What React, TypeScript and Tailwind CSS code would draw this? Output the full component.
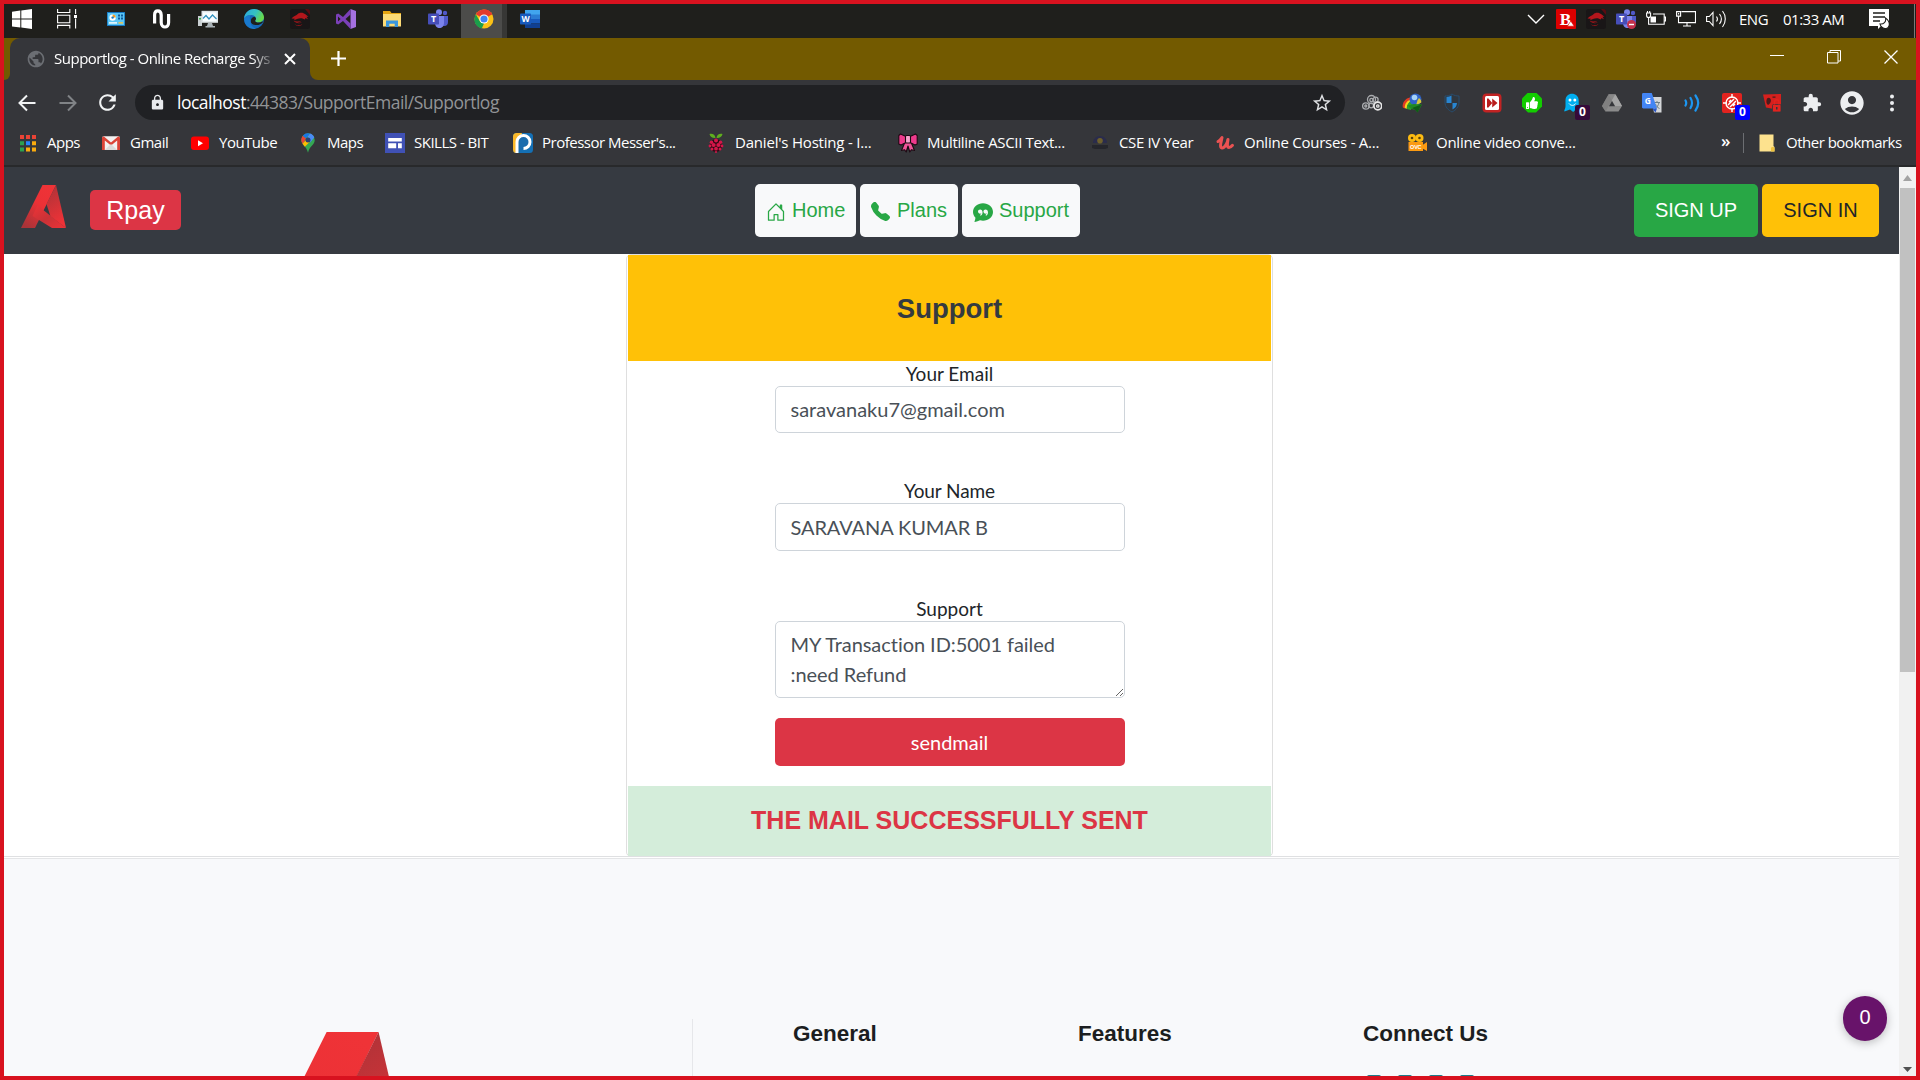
import React from "react";
import { BsChatQuoteFill, BsHouseDoor, BsTelephoneFill } from "react-icons/bs";
import { FaThumbsUp } from "react-icons/fa";
import { MdAccountCircle, MdExtension, MdLock, MdPublic, MdRefresh, MdStarBorder } from "react-icons/md";

const svg = { xmlns: "http://www.w3.org/2000/svg", viewBox: "0 0 20 20", width: 20, height: 20 };

/* ---------- taskbar icons ---------- */

const WindowsIcon = () => (
  <svg {...svg} fill="#fff">
    <path d="M0 2.8 8.3 1.6V9.6H0zM9.3 1.4 20 0v9.6H9.3zM0 10.6h8.3v8L0 17.4zM9.3 10.6H20V20L9.3 18.6z" />
  </svg>
);
const TaskViewIcon = () => (
  <svg {...svg} fill="none" stroke="#fff" strokeWidth="1.1">
    <path d="M.6 0v3.5h12.2V0M.6 6.2h12.2v7.6H.6zM.6 19.4v-3h12.2v3M18.6 0v5M18.6 9.6V19.4" />
    <path d="M17 6h3v3h-3z" fill="#fff" stroke="none" />
  </svg>
);
const NewsIcon = () => (
  <svg {...svg}>
    <rect x="1" y="3" width="18" height="14" fill="#1579c4" />
    <rect x="1.8" y="4" width="16.4" height="12" fill="#5cc6f5" />
    <circle cx="6.6" cy="8.6" r="3.2" fill="#fff" />
    <path d="M6.6 8.6V5.4a3.2 3.2 0 0 1 3.2 3.2z" fill="#f29a1f" />
    <circle cx="6.6" cy="8.6" r="1.2" fill="#1579c4" />
    <path d="M12 5.6h2v2h-2zM15 5.6h2v2h-2zM12 8.6h2v2h-2zM15 8.6h2v2h-2z" fill="#0c5ca0" />
    <path d="M3 13.2h8v1.4H3z" fill="#fff" />
    <path d="M12.5 13.2H17v1.4h-4.5z" fill="#f6c544" />
  </svg>
);
const WaveIcon = () => (
  <svg {...svg} fill="none" stroke="#fff" strokeWidth="3.2">
    <path d="M2.6 14.5V6c0-5.500 6.400-5.500 6.600 0v7.500c.2 6 7.400 6 7.400 0V5" />
  </svg>
);
const MonitorIcon = () => (
  <svg {...svg}>
    <path d="M0 7h4v10H0z" fill="#c9cfd2" />
    <path d="M1 9h2v1.5H1z" fill="#3bb44a" />
    <path d="M3.5 1.8H20v12H3.5z" fill="#dfe5e8" />
    <path d="M5 3.3h13.5v9H5z" fill="#f8fdff" />
    <path d="m5 9.5 3-3 3 3.500 3.500-4 4 4" fill="none" stroke="#3190bd" strokeWidth="1.2" />
    <path d="M10 14h4l1 3h2v1.6H7.5V17H9z" fill="#a9b2b6" />
  </svg>
);
const EdgeIcon = () => (
  <svg {...svg}>
    <defs>
      <linearGradient id="edgeTop" x1="0" y1="0" x2="1" y2=".4">
        <stop offset="0" stopColor="#2aa7e0" />
        <stop offset=".6" stopColor="#35c1c0" />
        <stop offset="1" stopColor="#66d94c" />
      </linearGradient>
    </defs>
    <circle cx="10" cy="10" r="10" fill="#1568b8" />
    <path d="M0 9.5C.5 4 5 0 10 0c5.7 0 10 4 10 8.2 0 3.3-2.6 5.2-5.5 5.2-2 0-3.4-.7-3.4-1.500 0-.6.9-1 .9-2.500C12 7.500 9.600 6 6.800 6 3.500 6 1 7.600 0 9.500z" fill="url(#edgeTop)" />
    <path d="M6.7 12.5c0-2.600 1.500-4.300 3.800-4.800 1 .5 1.500 1.200 1.500 2-.1 1.300-.9 1.600-.9 2.300 0 .8 1.400 1.500 3.400 1.500 1.600 0 2.900-.5 3.900-1.300.3.300.5.900.3 1.300-1.500 1.500-3.500 2.600-5.900 2.600-3.500 0-6.100-1.500-6.100-3.600z" fill="#1f1f1c" />
    <path d="M6.6 12c-.2 3.500 2 7 6 7.600A10 10 0 0 1 0 10c1-2.500 4-4 7-4-1.500 1-1.500 3.500-.4 6z" fill="#1b7fd4" opacity=".75" />
  </svg>
);
const DragonIcon = () => (
  <svg {...svg}>
    <rect width="20" height="20" rx="2.5" fill="#191617" />
    <path d="M15 0h2.5A2.5 2.5 0 0 1 20 2.5V6z" fill="#5a0c12" />
    <path d="M1.500 9.500C3.500 7 6 6.700 7.500 5.200c1-1.300 3-1.800 5-1.400L15 5l3.500 2.800-2-.1 1.500 2.600-2.600-1.300-.4 1.500-2-.8c-2-.8-4-.3-6 .3L4 11.200l.8-1.500z" fill="#b3161c" />
    <path d="M3.500 11.500c2 1.300 5 1.300 8 .3-.8.8-2.500 1.300-4.500 1.300 1.500.7 3.500.8 5 .2-2 1.500-6.500 1.200-8.500-1.800zM4.500 15c2 1.500 5 1.700 8 .2-2 2.300-6 2.300-8-.2z" fill="#a8141a" />
  </svg>
);
const VisualStudioIcon = () => (
  <svg {...svg}>
    <path d="m14.5 0 5.500 2v16l-5.500 2z" fill="#a571e0" />
    <path d="M14.5 0 7 7.900 2.200 4.400 0 5.500v9l2.200 1.100L7 12.100l7.500 7.900v-5.500L9.500 10l5-4.500zM2 7.500 4.600 10 2 12.500z" fill="#7b40b8" fillRule="evenodd" />
  </svg>
);
const ExplorerIcon = () => (
  <svg {...svg}>
    <path d="M1 2h7l1.500 2H19v13H1z" fill="#e5a512" />
    <path d="M1 5h18v12.5H1z" fill="#fcdb76" />
    <path d="M4 18v-6.500h12V18h-3.300v-3.300H7.300V18z" fill="#3a96dd" />
  </svg>
);
const TeamsIcon = ({ busy = false }: { busy?: boolean }) => (
  <svg {...svg}>
    <circle cx="11" cy="3.2" r="3" fill="#7b83eb" />
    <circle cx="17" cy="4" r="2.2" fill="#5059c9" />
    <path d="M14 7h6v6c0 2.500-1.500 4-3.500 4H14z" fill="#5059c9" />
    <path d="M7 7h9v7c0 3-2 5-4.500 5S7 17 7 14z" fill="#7b83eb" />
    <rect x="0" y="4.5" width="11" height="11" rx=".8" fill="#464eb8" />
    <text x="5.5" y="13.2" fontSize="9" fontWeight="700" fontFamily="Open Sans, sans-serif" fill="#fff" textAnchor="middle">T</text>
    {busy && <circle cx="15.5" cy="15.5" r="4.5" fill="#c4314b" />}
    {busy && <path d="M13 14.8h5v1.4h-5z" fill="#fff" />}
  </svg>
);
const ChromeIcon = () => (
  <svg {...svg}>
    <circle cx="10" cy="10" r="9.5" fill="#fbc116" />
    <path d="M10 10 1.8 5.2A9.500 9.500 0 0 1 18.200 5.300z" fill="#e33b2e" />
    <path d="M10 .5a9.500 9.500 0 0 1 8.300 5H10z" fill="#e33b2e" />
    <path d="M1.8 5.2 6 12.500l4 2-2.200 5A9.500 9.500 0 0 1 1.800 5.200z" fill="#1a9e4b" />
    <circle cx="10" cy="10" r="4.6" fill="#fff" />
    <circle cx="10" cy="10" r="3.6" fill="#3f83f1" />
  </svg>
);
const WordIcon = () => (
  <svg {...svg}>
    <path d="M5 1h15v5H5z" fill="#41a5ee" />
    <path d="M5 5.5h15V10H5z" fill="#2b7cd3" />
    <path d="M5 10h15v4.5H5z" fill="#185abd" />
    <path d="M5 14.5h15V19H5z" fill="#103f91" />
    <rect x="0" y="4.5" width="11" height="11" rx=".8" fill="#185abd" />
    <text x="5.5" y="13" fontSize="8.5" fontWeight="700" fontFamily="Open Sans, sans-serif" fill="#fff" textAnchor="middle">W</text>
  </svg>
);

/* ---------- tray icons ---------- */

const ChevronIcon = () => (
  <svg {...svg} fill="none" stroke="#fff" strokeWidth="1.4"><path d="m2 6 8 8 8-8" /></svg>
);
const BitdefenderIcon = () => (
  <svg {...svg}>
    <rect width="20" height="20" rx="1" fill="#dc0000" />
    <text x="9.5" y="15.5" fontSize="17" fontWeight="700" fontFamily="Liberation Serif, serif" fill="#fff" textAnchor="middle">B</text>
    <path d="m14.8 12 3.4 5.200h-6.800z" fill="#fff" stroke="#dc0000" strokeWidth=".6" />
  </svg>
);
const BatteryIcon = () => (
  <svg {...svg} fill="none" stroke="#fff" strokeWidth="1.1">
    <path d="M7 5h11.200v10.200H2.600V10M18.500 8h1v4h-1M.6 4h4v2.500c0 1.500-.8 2-2 2s-2-.5-2-2zM1.500 4V2M3.700 4V2M2.600 8.500V11" />
    <path d="M4.5 7.500H10v6H4.500z" fill="#fff" stroke="none" />
  </svg>
);
const NetworkIcon = () => (
  <svg {...svg} fill="none" stroke="#fff" strokeWidth="1.1">
    <path d="M5.500 2.600h14v11H2.500V8M11 13.600V17M7 17h8M.6 2.600h4v4.500h-4zM2.600 7v1.500M2.600 4v1.500" />
  </svg>
);
const VolumeIcon = () => (
  <svg {...svg} fill="none" stroke="#fff" strokeWidth="1.1">
    <path d="M.6 7.500h2.700L7 3.500v13l-3.700-4H.6zM10.500 7.500c1.200 1.600 1.200 3.400 0 5M13.500 5c2.300 3 2.300 7 0 10" />
    <path d="M16.500 2c3.700 4.500 3.700 11.500 0 16" />
  </svg>
);
const NotificationIcon = () => (
  <svg {...svg}>
    <path d="M0 0h20v17h-8l-3 3v-3H0z" fill="#fff" />
    <path d="M4 4h12M4 8h12M4 12h7" stroke="#1f1f1c" strokeWidth="1.3" />
    <path d="M16.5 9c1 4-2 6.500-5.500 6 .6 3 3.500 5 6.200 4.500 3-.6 4-4.500 2.200-7.500-.7-1.300-1.700-2.300-2.900-3z" fill="#fff" stroke="#1f1f1c" strokeWidth="1.1" />
  </svg>
);

/* ---------- bookmark icons ---------- */

const AppsIcon = () => (
  <svg {...svg}>
    <path d="M2 2h4v4H2zM8 2h4v4H8zM14 2h4v4h-4z" fill="#ea4335" />
    <path d="M2 8.2h4v4H2zM2 14.4h4v4H2z" fill="#2ca14f" />
    <path d="M8 8.2h4v4H8z" fill="#2684fc" />
    <path d="M14 8.2h4v4h-4zM8 14.4h4v4H8zM14 14.4h4v4h-4z" fill="#fbab0e" />
  </svg>
);
const GmailIcon = () => (
  <svg {...svg}>
    <rect x="1" y="3.3" width="18" height="13.7" rx="1.5" fill="#f3f1f0" />
    <path d="M1 17V4.500L2.600 3.300 10 9.500l7.400-6.200L19 4.500V17h-2.800V7.500L10 12.600 3.800 7.500V17z" fill="#db4437" />
    <path d="M3.8 17 10 11l6.200 6z" fill="#dcdad8" />
  </svg>
);
const YouTubeIcon = () => (
  <svg {...svg}>
    <rect x="1" y="3.5" width="18" height="13.5" rx="3" fill="#f00" />
    <path d="m8 7.2 5 3-5 3z" fill="#fff" />
  </svg>
);
const MapsIcon = () => (
  <svg {...svg}>
    <path d="M10 .3A6.700 6.700 0 0 0 3.300 7c0 5 5.200 6 6.700 12.700C11.500 13 16.700 12 16.700 7A6.700 6.700 0 0 0 10 .3z" fill="#34a853" />
    <path d="M4.8 2.700 8 5.500 4.900 11C3.900 9.700 3.300 8.500 3.300 7c0-1.700.6-3.200 1.500-4.300z" fill="#ea4335" />
    <path d="M4.9 2.700A6.700 6.700 0 0 1 12 .6L8 5.300z" fill="#1a73e8" />
    <path d="M12 .6c2 .6 3.600 2 4.300 4l-4.100 4.800L9.500 4z" fill="#4a8cf5" />
    <path d="m12.2 8.500-5.400 5.300L4.600 10.800 8 7z" fill="#fbbc04" />
    <circle cx="10" cy="7" r="2.5" fill="#2c3e70" />
  </svg>
);
const SitesIcon = () => (
  <svg {...svg}>
    <path d="M0 0h20v20H0z" fill="#4051b5" />
    <path d="M3.2 5h13.600v3.400H3.200zM3.200 10.300h8v5h-8zM13 10.300h3.800v5H13z" fill="#fff" />
  </svg>
);
const MesserIcon = () => (
  <svg {...svg}>
    <rect width="20" height="20" rx="3.5" fill="#1470b5" />
    <path d="M3.5 0H9L4 20h-.5A3.500 3.500 0 0 1 0 16.500v-13A3.500 3.500 0 0 1 3.500 0z" fill="#fbb829" />
    <path d="M4 20V9a6.500 6.500 0 1 1 6.500 6.500" fill="#1a6cad" stroke="#fff" strokeWidth="3" />
  </svg>
);
const RaspberryIcon = () => (
  <svg {...svg}>
    <path d="M9.5 5C7 5.500 4 4 3.500 1c3-.8 5.500.5 6 4zM10.500 5C13 5.500 16 4 16.500 1c-3-.8-5.500.5-6 4z" fill="#5fae1f" />
    <circle cx="10" cy="12.5" r="6.3" fill="#2a0a12" />
    <g fill="#d6164a">
      <circle cx="10" cy="7.6" r="2" /><circle cx="5.5" cy="9.2" r="1.8" /><circle cx="14.5" cy="9.2" r="1.8" />
      <circle cx="7.6" cy="12" r="2.1" /><circle cx="12.4" cy="12" r="2.1" /><circle cx="4" cy="13" r="1.4" />
      <circle cx="16" cy="13" r="1.4" /><circle cx="10" cy="15.7" r="1.9" /><circle cx="6" cy="16" r="1.5" />
      <circle cx="14" cy="16" r="1.5" /><circle cx="10" cy="19" r="1" />
    </g>
  </svg>
);
const BowIcon = () => (
  <svg {...svg} stroke="#1b0a12" strokeWidth="1.1" strokeLinejoin="round">
    <path d="M7 9 3.500 17.500l3-.8 1.700 2.300L10 13l1.800 6 1.700-2.300 3 .8L13 9z" fill="#f0559a" />
    <path d="M8 3.500 2.500 1 .8 2.500V11l2.200 1 5-2.500zM12 3.500 17.500 1l1.700 1.500V11L17 12l-5-2.500z" fill="#ee3a8c" />
    <rect x="7.5" y="2.500" width="5" height="7.500" rx="1" fill="#f7a3cc" />
  </svg>
);
const CapIcon = () => (
  <svg {...svg}>
    <path d="M3 10c0-4 3-7 7-7s7 3 7 7z" fill="#2a2c4c" />
    <circle cx="10" cy="7.8" r="2.8" fill="#6e602d" />
    <path d="M2 12h16v3l-3 1H5l-3-1z" fill="#25262c" />
  </svg>
);
const UdemyIcon = () => (
  <svg {...svg} fill="none" stroke="#ea5252" strokeWidth="3" strokeLinecap="round" strokeLinejoin="round">
    <path d="M3 8.500C5 7.500 6 6 7 4.500 6.500 8 4 14.500 7 15c3 .3 5.500-6 6-8.500-.5 3-1.500 8 1 8 1.500 0 2.500-1 3.500-2.200" />
  </svg>
);
const VideoIcon = () => (
  <svg {...svg}>
    <circle cx="5" cy="5" r="4" fill="#fdbb12" /><circle cx="12.5" cy="5" r="4" fill="#fdbb12" />
    <circle cx="5" cy="5" r="1.3" fill="#5b430c" /><circle cx="12.5" cy="5" r="1.3" fill="#5b430c" />
    <path d="M1.5 9H16v9H1.500z" fill="#fb9a12" />
    <path d="m15.5 12 4.500-3v9l-4.500-2.500z" fill="#fb9a12" />
    <text x="8.7" y="15.8" fontSize="5.5" fontWeight="700" fontFamily="Liberation Sans, sans-serif" fill="#fff" textAnchor="middle">OVC</text>
  </svg>
);
const FolderIcon = () => (
  <svg {...svg}>
    <path d="M2.5 1.5h14V13l1 1v4.500h-15z" fill="#fde28e" />
    <path d="M14 18.5V15c0-1.500 3.500-1.500 3.500 0v3.500z" fill="#efc33e" />
  </svg>
);

/* ---------- extension icons ---------- */

const ChainIcon = () => (
  <svg {...svg} fill="none" stroke="#a9abae" strokeWidth="1.3">
    <circle cx="3.8" cy="13" r="3.2" /><circle cx="3.8" cy="13" r="1" />
    <circle cx="9.500" cy="6.5" r="4" /><circle cx="9.500" cy="7" r="1.7" />
    <circle cx="9.200" cy="12.500" r="2.300" /><circle cx="13.500" cy="6.800" r="2.600" />
    <circle cx="15.8" cy="13" r="3.900" stroke="#e8e8e8" strokeWidth="1.700" /><circle cx="15.8" cy="13" r="1.2" stroke="#e8e8e8" />
  </svg>
);
const IdmIcon = () => (
  <svg {...svg}>
    <path d="M8 4.500C3 5.500 0 10 .8 14.500L3 15.500c0-4 2-7 6-8.500z" fill="#e43b22" />
    <path d="M9 6.500C5 7.500 2.500 11 2.800 15l2 1c0-3.500 1.500-6 5-7.500z" fill="#f4d31f" />
    <path d="M9.500 8C6.500 9 4.500 12 4.800 16l4 1 3-6z" fill="#2ba02b" />
    <circle cx="13.5" cy="6.5" r="6" fill="#2f63c6" />
    <circle cx="12.5" cy="4.5" r="2.800" fill="#a5d2f7" />
    <path d="M13.500 12.500c2-2.500 1-5 3.500-7.500 1.500 1 2.500 3 2.300 4.500z" fill="#d8c93a" />
    <path d="m6 12.500 6-1.500 8 .5-4.500 8-2.500-3C10 17 8 15.500 6 12.500z" fill="#1f8a22" />
    <path d="m10 15 9.500-3.500-4 8-2.500-3z" fill="#0f5c16" />
  </svg>
);
const ShieldIcon = () => (
  <svg {...svg}>
    <path d="M10 1c2 1.500 4.500 2 7 2v6c0 5-3 8-7 10-4-2-7-5-7-10V3c2.500 0 5-.5 7-2z" fill="#30373f" stroke="#294c6c" />
    <path d="M4.5 4c2-.2 3.800-.6 5-1.500V10h-5zM10.500 10H15c-.2 3-1.800 5.200-4.500 6.500z" fill="#2886d2" />
  </svg>
);
const FastForwardIcon = () => (
  <svg {...svg}>
    <rect x=".5" y=".5" width="19" height="19" rx="4" fill="#c12323" />
    <rect x="3" y="3" width="14" height="14" rx="1.500" fill="#fff" />
    <path d="M5 5.500h1.500L10.200 10l-3.700 4.500H5L7.500 10zM5 5.500 10.200 10 5 14.500zM10.200 5.500l5.300 4.500-5.300 4.500z" fill="#b91e1e" />
  </svg>
);
const ThumbIcon = () => (
  <div className="grid h-5 w-5 place-items-center bg-[#13cd00] [clip-path:polygon(30%_0,70%_0,100%_30%,100%_70%,70%_100%,30%_100%,0_70%,0_30%)]">
    <FaThumbsUp size={12} color="#fff" />
  </div>
);
const GhostIcon = () => (
  <svg {...svg}>
    <path d="M3.5 13V7.500C3.500 3 6.500.7 10 .7s6.700 2.300 6.700 6.800V18l-3-1.500-2.500 2.500L8 16.500l-5.500 2C1.800 17 3.500 16 3.500 13z" fill="#00aef0" />
    <circle cx="8" cy="7" r="1.5" fill="#fff" /><circle cx="12.8" cy="7" r="1.5" fill="#fff" />
    <path d="M7 10.5c2 2.500 5 2.500 6.700 0" fill="none" stroke="#fff" />
  </svg>
);
const DriveIcon = () => (
  <svg {...svg}>
    <path d="M6.5 1.500h7L20 13l-3.500 5.500h-13L0 13z" fill="#8b8b8b" />
    <path d="M6.5 1.500h7L20 13h-6.800z" fill="#a5a5a5" />
    <path d="m0 13 3.500 5.500 9.700-17H6.500z" fill="#7c7c7c" opacity=".7" />
    <path d="m10 8 3 5.300H7z" fill="#35363a" />
  </svg>
);
const TranslateIcon = () => (
  <svg {...svg}>
    <path d="M9 4h10.500v15.500H12z" fill="#d4d6d8" />
    <path d="M12 9.5h6M15 8v1.500M17 9.500c-.5 3-2 4.500-4 6M13.500 11c.5 2 2 3.500 4 4.500" stroke="#6d7d87" fill="none" />
    <path d="M0 1.300C0 .6.6 0 1.300 0h8.500L15 15.500H1.300C.6 15.500 0 15 0 14.300z" fill="#4385f4" />
    <path d="m10 15.5 3.500 4 1.500-4z" fill="#2a56c6" />
    <text x="5.8" y="10.8" fontSize="8.5" fontWeight="700" fontFamily="Open Sans, sans-serif" fill="#fff" textAnchor="middle">G</text>
  </svg>
);
const SoundWavesIcon = () => (
  <svg {...svg} fill="none" stroke="#1c97f2" strokeWidth="2.2" strokeLinecap="round">
    <path d="M3.500 7.500c1 1.700 1 3.300 0 5M8.500 5c2 3.300 2 6.700 0 10M13.500 2.500c3.600 5 3.600 10 0 15" />
  </svg>
);
const TargetIcon = () => (
  <svg {...svg} fill="none" stroke="#fff" strokeWidth="1.4">
    <rect width="20" height="20" rx="2" fill="#e2231f" stroke="none" />
    <circle cx="10" cy="10" r="6" />
    <path d="M10 1v4M10 15v4M1 10h4M15 10h4M6 12l6-6M8 14l6-6M7 9l2-2M11 13l2-2" />
  </svg>
);
const RedLockIcon = () => (
  <svg {...svg}>
    <path d="M1 1.500 19 1v11l-7 4-8-1.500z" fill="#d6201d" />
    <path d="M5 5.500c2-1.500 3.500-.5 4 2-.2 2-1.500 4-3 4.500C4 10.500 4 8 5 5.500zM10.500 3.500h3v1.300h-3z" fill="#4b1b1b" />
    <rect x="10.5" y="11.5" width="8.5" height="7.5" rx="1" fill="#e2231f" stroke="#35363a" strokeWidth=".8" />
    <path d="M12.500 11.500V9c0-3 4.500-3 4.500 0v2.500" fill="none" stroke="#e2231f" strokeWidth="1.3" />
    <path d="M14 14h1.500v2.500H14z" fill="#35363a" />
  </svg>
);

/* ---------- brand mark ---------- */

const BrandMark = ({ className, id }: { className: string; id: string }) => (
  <svg viewBox="0 0 45 43" className={className} preserveAspectRatio="none">
    <defs>
      <linearGradient id={id + "l"} x1=".8" y1="0" x2=".2" y2="1">
        <stop offset="0" stopColor="#ef3337" /><stop offset=".45" stopColor="#ec3136" /><stop offset="1" stopColor="#a93338" />
      </linearGradient>
      <linearGradient id={id + "r"} x1="0" y1="0" x2=".3" y2="1">
        <stop offset="0" stopColor="#a93338" /><stop offset="1" stopColor="#ee3237" />
      </linearGradient>
      <linearGradient id={id + "b"} x1="0" y1="0" x2="1" y2="1">
        <stop offset="0" stopColor="#ef3337" /><stop offset=".5" stopColor="#c93237" /><stop offset="1" stopColor="#ee3237" />
      </linearGradient>
    </defs>
    <path d="M21.500 0H35L14 43H0z" fill={`url(#${id}l)`} />
    <path d="M35 0 45 43 29.500 31.500 25.500 19z" fill={`url(#${id}r)`} />
    <path d="M16.500 20.500 45 43H31L11.500 31z" fill={`url(#${id}b)`} />
  </svg>
);

/* ---------- window chrome ---------- */

function Taskbar() {
  return (
    <div className="flex h-[34px] shrink-0 items-center bg-[#1f1f1c] pb-1 text-[15px] text-white">
      <div className="flex w-9 justify-center"><WindowsIcon /></div>
      <div className="flex w-[54px] justify-center"><TaskViewIcon /></div>
      <div className="flex w-[44px] justify-center"><NewsIcon /></div>
      <div className="ml-px flex w-[46px] justify-center"><WaveIcon /></div>
      {[MonitorIcon, EdgeIcon, DragonIcon, VisualStudioIcon, ExplorerIcon].map((Icon, i) => (
        <div key={i} className="flex w-[46px] justify-center"><Icon /></div>
      ))}
      <div className="flex w-[46px] justify-center"><TeamsIcon /></div>
      <div className="-mb-1 flex h-[34px] w-[46px] items-center border-r-[5px] border-[#373735] bg-[#4c4c4a] pb-1 pl-[13px]"><ChromeIcon /></div>
      <div className="ml-[13px]"><WordIcon /></div>
      <div className="ml-auto flex items-center">
        <div className="flex items-center gap-[10px]">
          <ChevronIcon /><BitdefenderIcon /><DragonIcon /><TeamsIcon busy /><BatteryIcon /><NetworkIcon /><VolumeIcon />
        </div>
        <span className="ml-[13px] w-[44px] tracking-[-0.5px]">ENG</span>
        <span className="mr-px w-[85px] whitespace-nowrap tracking-[-0.5px]">01:33 AM</span>
        <div className="mr-[25px]"><NotificationIcon /></div>
      </div>
      <div className="-mb-1 mr-px h-[34px] w-px bg-[#7a7a78]" />
    </div>
  );
}

function TitleBar() {
  return (
    <div className="flex h-[42px] shrink-0 bg-[#735a00] text-white">
      <div className="h-full w-[6px] shrink-0 bg-[#35363a]"><div className="h-full w-[6px] rounded-br-[6px] bg-[#735a00]" /></div>
      <div className="flex h-full w-[300px] shrink-0 items-center rounded-t-[10px] bg-[#35363a] pl-4">
        <MdPublic size={20} className="text-[#6b6e73]" />
        <div className="-mt-px ml-[8px] w-[229px] whitespace-nowrap text-[15px] tracking-[-0.49px] [mask-image:linear-gradient(to_right,black_198px,transparent_222px)]">
          Supportlog - Online Recharge Sys
        </div>
        <svg width="12" height="12" viewBox="0 0 12 12" className="ml-px" stroke="#fff" strokeWidth="2"><path d="m1 1 10 10M11 1 1 11" /></svg>
      </div>
      <div className="h-full w-[8px] bg-[#35363a]"><div className="h-full w-[8px] rounded-bl-[8px] bg-[#735a00]" /></div>
      <svg width="15" height="15" viewBox="0 0 15 15" className="ml-[13px] mt-[13px]" stroke="#fff" strokeWidth="2.2"><path d="M7.500 0v15M0 7.500h15" /></svg>
      <div className="ml-auto mr-[18px] flex items-start gap-[43px] pt-3">
        <svg width="14" height="14" stroke="#fff" strokeWidth="1"><path d="M0 5.500h14" /></svg>
        <svg width="14" height="14" fill="none" stroke="#fff" strokeWidth="1"><path d="M.5 2.500h10.500v10.500H.5zM3 2.500V.5h10.500v10.500h-2.300" /></svg>
        <svg width="14" height="14" stroke="#fff" strokeWidth="1.3"><path d="m.5.5 13 13M13.500.5l-13 13" /></svg>
      </div>
    </div>
  );
}

const Badge = ({ className }: { className: string }) => (
  <span className={`absolute left-[13px] top-[12px] grid h-[15px] w-[15px] place-items-center rounded-[2px] text-[12px] font-bold leading-none text-white ${className}`}>0</span>
);

function Toolbar() {
  return (
    <div className="flex h-[45px] shrink-0 items-center bg-[#35363a] text-white">
      <svg width="18" height="18" viewBox="0 0 18 18" fill="none" stroke="#f1f3f4" strokeWidth="2" className="ml-[14px]"><path d="M17.500 9H2M9 1.500 1.500 9 9 16.500" /></svg>
      <svg width="18" height="18" viewBox="0 0 18 18" fill="none" stroke="#808386" strokeWidth="2" className="ml-[23px]"><path d="M.5 9H16M9 1.500 16.500 9 9 16.500" /></svg>
      <MdRefresh size={25} className="ml-[18px] text-[#f1f3f4]" />
      <div className="ml-[15px] flex h-[35px] w-[1210px] items-center rounded-full bg-[#202124] pl-[14px]">
        <MdLock size={17} className="text-[#e8eaed]" />
        <span className="ml-[11px] whitespace-nowrap text-[17.5px] tracking-[-0.49px] text-[#929497]"><span className="text-white">localhost</span>:44383/SupportEmail/Supportlog</span>
        <MdStarBorder size={22} className="ml-auto mr-[12px] text-[#dfe1e4]" />
      </div>
      <div className="ml-[17px] flex items-center gap-5">
        <ChainIcon /><IdmIcon /><ShieldIcon /><FastForwardIcon /><ThumbIcon />
        <div className="relative"><GhostIcon /><Badge className="bg-[#350a3a]" /></div>
        <DriveIcon /><TranslateIcon /><SoundWavesIcon />
        <div className="relative"><TargetIcon /><Badge className="bg-[#0000ff]" /></div>
        <RedLockIcon />
        <MdExtension size={20} className="text-[#eceef0]" />
        <MdAccountCircle size={28} className="-mx-1 text-[#eceef0]" />
        <svg {...svg} fill="#eceef0"><circle cx="10" cy="3.5" r="2" /><circle cx="10" cy="10" r="2" /><circle cx="10" cy="16.5" r="2" /></svg>
      </div>
    </div>
  );
}

const bookmarks = [
  { label: "Apps", Icon: AppsIcon, width: "w-[83px]" },
  { label: "Gmail", Icon: GmailIcon, width: "w-[89px]" },
  { label: "YouTube", Icon: YouTubeIcon, width: "w-[108px]" },
  { label: "Maps", Icon: MapsIcon, width: "w-[87px]" },
  { label: "SKILLS - BIT", Icon: SitesIcon, width: "w-[128px]" },
  { label: "Professor Messer's...", Icon: MesserIcon, width: "w-[193px]" },
  { label: "Daniel's Hosting - I...", Icon: RaspberryIcon, width: "w-[192px] tracking-[-0.2px]" },
  { label: "Multiline ASCII Text...", Icon: BowIcon, width: "w-[192px] tracking-[-0.35px]" },
  { label: "CSE IV Year", Icon: CapIcon, width: "w-[125px] tracking-[-0.35px]" },
  { label: "Online Courses - A...", Icon: UdemyIcon, width: "w-[192px] tracking-[-0.25px]" },
  { label: "Online video conve...", Icon: VideoIcon, width: "w-[180px] tracking-[-0.25px]" },
];

function BookmarksBar() {
  return (
    <div className="flex h-[42px] shrink-0 items-center border-b-2 border-[#28292b] bg-[#35363a] pb-[4px] pl-[14px] text-[15px] tracking-[-0.5px] text-white">
      {bookmarks.map(({ label, Icon, width }) => (
        <div key={label} className={`flex shrink-0 items-center gap-[9px] whitespace-nowrap ${width}`}>
          <Icon /><span className="-mt-0.5">{label}</span>
        </div>
      ))}
      <span className="-mt-[5px] ml-auto text-[17px] font-semibold leading-none">»</span>
      <div className="ml-[13px] h-5 w-px bg-[#6c6e72]" />
      <div className="ml-[13px] flex items-center gap-[9px] pr-[15px]"><FolderIcon /><span className="-mt-0.5 w-[115px] whitespace-nowrap">Other bookmarks</span></div>
    </div>
  );
}

/* ---------- page ---------- */

function SiteHeader() {
  return (
    <header className="flex h-[87px] shrink-0 items-center bg-[#363a41] pb-px pl-[17px] pr-5 text-[20px]">
      <BrandMark className="-mt-[7px] h-[43px] w-[45px]" id="nav" />
      <span className="ml-[24px] flex h-10 w-[91px] items-center justify-center rounded-[5px] bg-[#dc3545] pt-px text-[25px] text-white">Rpay</span>
      <nav className="ml-[574px] flex gap-1 text-[#28a745]">
        <a className="flex h-[53px] w-[101px] items-center rounded-[5px] bg-[#f8f9fa] pl-[11px]"><BsHouseDoor size={20} className="mt-[3px] mr-[6px]" />Home</a>
        <a className="flex h-[53px] w-[98px] items-center rounded-[5px] bg-[#f8f9fa] pl-[11px]"><BsTelephoneFill size={19} className="mt-[3px] mr-[7px]" />Plans</a>
        <a className="flex h-[53px] w-[118px] items-center rounded-[5px] bg-[#f8f9fa] pl-[11px]"><BsChatQuoteFill size={20} className="mt-[3px] mr-[6px]" />Support</a>
      </nav>
      <div className="ml-auto flex gap-1">
        <button className="h-[53px] w-[124px] rounded-[5px] bg-[#28a745] text-white">SIGN UP</button>
        <button className="h-[53px] w-[117px] rounded-[5px] bg-[#ffc107] text-[#212529]">SIGN IN</button>
      </div>
    </header>
  );
}

function SupportCard() {
  return (
    <div className="ml-[622px] flex h-[603px] w-[647px] shrink-0 flex-col rounded-[5px] border border-[#dfdfdf] bg-white font-[Lato,sans-serif] text-[20px] text-[#495057] [font-variant-ligatures:none]">
      <div className="mx-px flex h-[106px] shrink-0 items-center justify-center bg-[#ffc107] pt-0.5 font-['Liberation_Sans',sans-serif] text-[27.5px] font-bold text-[#343a40]">Support</div>
      <div className="flex flex-1 flex-col items-center">
        <label className="flex h-[25px] items-center pt-0.5 text-[19px] text-[#212529]">Your Email</label>
        <input className="h-[47px] w-[350px] rounded-[5px] border border-[#ced4da] px-[15px] pb-px" defaultValue="saravanaku7@gmail.com" />
        <label className="mt-[45px] flex h-[25px] items-center pt-0.5 text-[19px] tracking-[-0.1px] text-[#212529]">Your Name</label>
        <input className="h-[48px] w-[350px] rounded-[5px] border border-[#ced4da] px-[15px] tracking-[-0.1px]" defaultValue="SARAVANA KUMAR B" />
        <label className="mt-[45px] flex h-[25px] items-center pt-0.5 text-[19px] text-[#212529]">Support</label>
        <textarea className="h-[77px] w-[350px] resize overflow-hidden rounded-[5px] border border-[#ced4da] px-[15px] pt-[7px] leading-[30px] tracking-[-0.05px]" defaultValue={"MY Transaction ID:5001 failed\n:need Refund"} />
        <button className="mt-5 h-12 w-[350px] rounded-[5px] bg-[#dc3545] text-white">sendmail</button>
      </div>
      <div className="mx-px flex h-[70px] shrink-0 items-center justify-center bg-[#d4edda] font-['Liberation_Sans',sans-serif] text-[25px] font-bold text-[#dc3545]">THE MAIL SUCCESSFULLY SENT</div>
    </div>
  );
}

function Footer() {
  return (
    <div className="-mt-px flex min-h-0 flex-1 flex-col border-t border-[#dfe0e2] pt-px">
      <footer className="flex flex-1 overflow-hidden border-t border-[#e4e5e7] bg-[#f8f9fb] pt-[160px] text-[22.5px] font-bold leading-[30px] text-[#1c1e21]">
        <div className="w-[688px] shrink-0 pl-[240px] pt-[13px]"><BrandMark className="h-[165px] w-[173px]" id="foot" /></div>
        <div className="grid grid-cols-[285px_285px_300px] border-l border-[#e6e7ea] pl-[100px]">
          <h5>General</h5>
          <h5>Features</h5>
          <div>
            <h5>Connect Us</h5>
            <div className="ml-[4px] mt-[25.500px] flex gap-[17px]">
              {[0, 1, 2, 3].map((i) => <div key={i} className="h-[18px] w-[14px] rounded-[2px] bg-[#1f7a88]" />)}
            </div>
          </div>
        </div>
      </footer>
    </div>
  );
}

export default function App() {
  return (
    <div className="relative flex h-[1080px] w-[1920px] flex-col overflow-hidden border-4 border-[#d8121f] bg-white font-['Open_Sans',sans-serif]">
      <Taskbar />
      <TitleBar />
      <Toolbar />
      <BookmarksBar />
      <div className="flex min-h-0 flex-1 font-['Liberation_Sans',sans-serif]">
        <div className="flex min-w-0 flex-1 flex-col">
          <SiteHeader />
          <SupportCard />
          <Footer />
        </div>
        <div className="flex w-[17px] shrink-0 flex-col items-center bg-[#f1f1f1]">
          <svg width="17" height="21" fill="#a3a3a3"><path d="m8.5 8 4.500 6H4z" /></svg>
          <div className="h-[484px] w-[15px] bg-[#c1c1c1]" />
          <svg width="17" height="21" fill="#505050" className="mt-auto"><path d="M4 12h9l-4.500 5z" /></svg>
        </div>
      </div>
      <div className="absolute left-[1839px] top-[992px] grid h-[45px] w-[44px] place-items-center rounded-full bg-[#68136a] pb-1 font-['Liberation_Sans',sans-serif] text-[20px] text-white shadow-[0_2px_10px_rgba(0,0,0,0.25)]">0</div>
    </div>
  );
}
